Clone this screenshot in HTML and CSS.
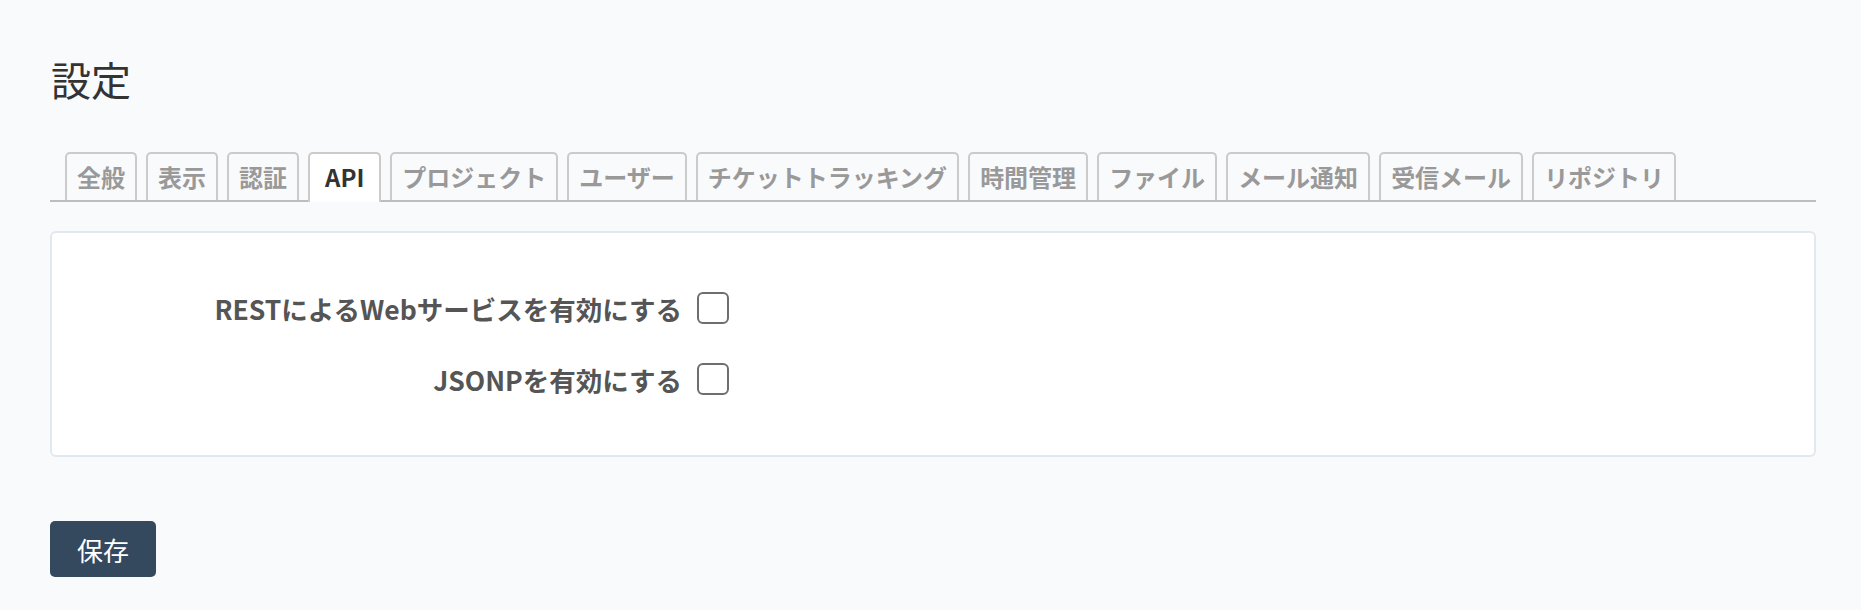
FILE: index.html
```html
<!DOCTYPE html>
<html lang="ja">
<head>
<meta charset="utf-8">
<title>設定</title>
<link rel="stylesheet" href="styles.css">
</head>
<body>
<div class="topshade"></div>
<main class="page">
  <h1 class="title">設定</h1>
  <nav class="tabs">
    <a class="tab">全般</a>
    <a class="tab">表示</a>
    <a class="tab">認証</a>
    <a class="tab tab-active">API</a>
    <a class="tab">プロジェクト</a>
    <a class="tab">ユーザー</a>
    <a class="tab">チケットトラッキング</a>
    <a class="tab">時間管理</a>
    <a class="tab">ファイル</a>
    <a class="tab">メール通知</a>
    <a class="tab">受信メール</a>
    <a class="tab">リポジトリ</a>
  </nav>
  <section class="box">
    <div class="row">
      <label class="label" for="rest">RESTによるWebサービスを有効にする</label>
      <input class="check" type="checkbox" id="rest">
    </div>
    <div class="row">
      <label class="label" for="jsonp">JSONPを有効にする</label>
      <input class="check" type="checkbox" id="jsonp">
    </div>
  </section>
  <button class="save" type="button">保存</button>
</main>
</body>
</html>
```
FILE: styles.css
```css
html, body {
  margin: 0;
  padding: 0;
  background: #f9fafc;
  font-family: "Noto Sans CJK JP", "Noto Sans", sans-serif;
  color: #333;
}

.topshade {
  height: 0;
  box-shadow: 0 0 4px rgba(0, 0, 0, 0.18);
}

.page {
  padding: 55px 45px 0 50px;
}

.title {
  margin: 0;
  padding-left: 1px;
  font-size: 40px;
  line-height: 48px;
  font-weight: normal;
  color: #333;
}

.tabs {
  display: flex;
  gap: 9px;
  margin-top: 49px;
  padding-left: 15px;
  border-bottom: 2px solid #bdbdbd;
  height: 48px;
  align-items: flex-end;
}

.tab {
  box-sizing: border-box;
  height: 48px;
  padding: 0 10px;
  border: 2px solid #cbcbcb;
  border-bottom: none;
  border-radius: 5px 5px 0 0;
  font-size: 24px;
  font-weight: bold;
  line-height: 46px;
  color: #999;
  white-space: nowrap;
  cursor: pointer;
}

.tab-active {
  height: 50px;
  margin-bottom: -2px;
  background: #fff;
  color: #333;
  padding: 0 15px;
}

.box {
  margin-top: 29px;
  background: #fff;
  border: 2px solid #e1e8f0;
  border-radius: 6px;
  padding: 53px 0 54px;
  display: flex;
  flex-direction: column;
  gap: 27px;
}

.row {
  display: grid;
  grid-template-columns: 630px auto;
  column-gap: 15px;
  align-items: center;
  height: 44px;
}

.label {
  text-align: right;
  font-size: 26.5px;
  font-weight: bold;
  color: #555;
  white-space: nowrap;
}

.check {
  appearance: none;
  -webkit-appearance: none;
  margin: 0;
  width: 32px;
  height: 32px;
  box-sizing: border-box;
  border: 2px solid #6e6e6e;
  border-radius: 6px;
  background: #fff;
}

.save {
  margin-top: 64px;
  width: 106px;
  height: 56px;
  border: none;
  border-radius: 5px;
  background: #34495e;
  color: #fff;
  font-family: "Noto Sans CJK JP", "Noto Sans", sans-serif;
  font-size: 26px;
  cursor: pointer;
}
```
